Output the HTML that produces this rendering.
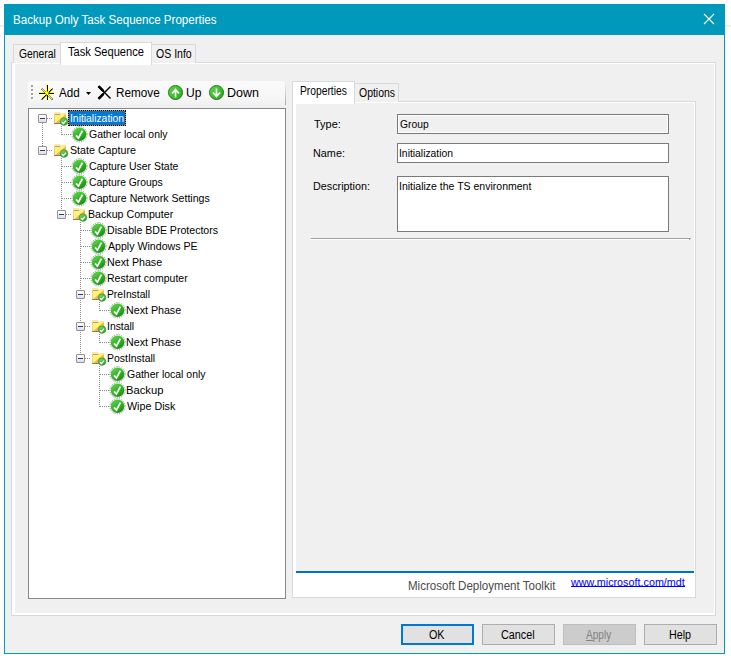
<!DOCTYPE html>
<html><head><meta charset="utf-8"><style>
html,body{margin:0;padding:0;background:#fff;width:731px;height:660px;overflow:hidden;position:relative}
.tx{position:absolute;white-space:nowrap;font-family:"Liberation Sans",sans-serif;transform-origin:0 0}
</style></head><body>
<div style="position:absolute;left:0px;top:25px;width:4px;height:2px;background:#efefef"></div><div style="position:absolute;left:725px;top:25px;width:6px;height:2px;background:#efefef"></div><div style="position:absolute;left:4px;top:4px;width:721px;height:650px;background:#0099bc"></div><div style="position:absolute;left:5px;top:35px;width:719px;height:618px;background:#f0f0f0"></div><svg style="position:absolute;left:703px;top:13px" width="12" height="12"><path d="M1 1L11 11M11 1L1 11" stroke="#fff" stroke-width="1.1"/></svg><div style="position:absolute;left:11px;top:62px;width:703px;height:552px;border:1px solid #d9d9d9;background:#fff"></div><div style="position:absolute;left:15px;top:64px;width:699px;height:549px;background:#f0f0f0"></div><div style="position:absolute;left:13px;top:44px;width:46px;height:18px;border:1px solid #d9d9d9;border-bottom:none;background:#f0f0f0"></div><div style="position:absolute;left:151px;top:44px;width:43px;height:18px;border:1px solid #d9d9d9;border-bottom:none;background:#f0f0f0"></div><div style="position:absolute;left:60px;top:42px;width:90px;height:22px;border:1px solid #d9d9d9;border-bottom:none;background:#fff"></div><div style="position:absolute;left:28px;top:81px;width:257px;height:24px;background:linear-gradient(#fbfbfb,#f6f6f6 70%,#f1f1f1);border-radius:3px 3px 0 0"></div><div style="position:absolute;left:285px;top:84px;width:1px;height:21px;background:linear-gradient(#ececec,#a8a8a8)"></div><div style="position:absolute;left:32px;top:86px;width:2px;height:2px;background:#fff"></div><div style="position:absolute;left:31px;top:85px;width:2px;height:2px;background:#a0a0a0"></div><div style="position:absolute;left:32px;top:90px;width:2px;height:2px;background:#fff"></div><div style="position:absolute;left:31px;top:89px;width:2px;height:2px;background:#a0a0a0"></div><div style="position:absolute;left:32px;top:94px;width:2px;height:2px;background:#fff"></div><div style="position:absolute;left:31px;top:93px;width:2px;height:2px;background:#a0a0a0"></div><div style="position:absolute;left:32px;top:98px;width:2px;height:2px;background:#fff"></div><div style="position:absolute;left:31px;top:97px;width:2px;height:2px;background:#a0a0a0"></div><svg style="position:absolute;left:38px;top:84px" width="18" height="18" viewBox="0 0 18 18">
<g stroke-width="1" shape-rendering="crispEdges">
<path d="M9.5 1V16M1 9.5H16" stroke="#000"/>
<path d="M8.5 1V16M1 8.5H16" stroke="#ff0"/>
</g>
<path d="M3.5 4.5L14.5 15.5M14.5 4.5L3.5 15.5" stroke="#000" stroke-width="1.3"/>
<path d="M3 4L14 15M14 4L3 15" stroke="#ff0" stroke-width="1"/>
<circle cx="9" cy="9" r="1.8" fill="#ff0"/>
</svg><svg style="position:absolute;left:86px;top:92px" width="5" height="3"><path d="M0 0H5L2.5 3Z" fill="#000"/></svg><svg style="position:absolute;left:97px;top:85px" width="15" height="15" viewBox="0 0 15 15">
<path d="M1.5 1.5L13.5 13.5" stroke="#000" stroke-width="1.4"/>
<path d="M1.5 1.2L6.5 6.2" stroke="#000" stroke-width="2.6"/>
<path d="M13.5 1.5L1.5 13.5" stroke="#000" stroke-width="1.4"/>
<path d="M1.5 13.8L6.5 8.8" stroke="#000" stroke-width="2.6"/>
</svg><svg style="position:absolute;left:168.0px;top:85px" width="15" height="15" viewBox="0 0 15 15">
<defs><linearGradient id="g175.5" x1="0" y1="0" x2="1" y2="1"><stop offset="0" stop-color="#5fd84f"/><stop offset="1" stop-color="#25a51a"/></linearGradient></defs>
<circle cx="7.5" cy="7.5" r="7" fill="url(#g175.5)" stroke="#15800e" stroke-width="1"/>
<path d="M4 8.5L7.5 4.5L11 8.5M7.5 5V12.5" stroke="#fff" stroke-width="1.7" fill="none"/>
</svg><svg style="position:absolute;left:209.0px;top:85px" width="15" height="15" viewBox="0 0 15 15">
<defs><linearGradient id="g216.5" x1="0" y1="0" x2="1" y2="1"><stop offset="0" stop-color="#5fd84f"/><stop offset="1" stop-color="#25a51a"/></linearGradient></defs>
<circle cx="7.5" cy="7.5" r="7" fill="url(#g216.5)" stroke="#15800e" stroke-width="1"/>
<path d="M4 7.5L7.5 11.5L11 7.5M7.5 11V3.5" stroke="#fff" stroke-width="1.7" fill="none"/>
</svg><div style="position:absolute;left:28px;top:108px;width:256px;height:489px;border:1px solid #828790;background:#fff"></div><svg style="position:absolute;left:0;top:0" width="731" height="660"><defs><linearGradient id="gc" x1="0.2" y1="0" x2="0.8" y2="1"><stop offset="0" stop-color="#5cd84a"/><stop offset="0.55" stop-color="#2fb022"/><stop offset="1" stop-color="#178a10"/></linearGradient><linearGradient id="gf" x1="0" y1="0" x2="1" y2="1"><stop offset="0" stop-color="#fbc45a"/><stop offset="1" stop-color="#f6a72e"/></linearGradient><linearGradient id="gb" x1="0" y1="0" x2="1" y2="1"><stop offset="0" stop-color="#7ee06a"/><stop offset="1" stop-color="#1f9a16"/></linearGradient></defs><path d="M47 118.5H53" stroke="#8c8c8c" stroke-dasharray="1 1"/><path d="M62 134.5H71" stroke="#8c8c8c" stroke-dasharray="1 1"/><path d="M47 150.5H53" stroke="#8c8c8c" stroke-dasharray="1 1"/><path d="M62 166.5H71" stroke="#8c8c8c" stroke-dasharray="1 1"/><path d="M62 182.5H71" stroke="#8c8c8c" stroke-dasharray="1 1"/><path d="M62 198.5H71" stroke="#8c8c8c" stroke-dasharray="1 1"/><path d="M66 214.5H72" stroke="#8c8c8c" stroke-dasharray="1 1"/><path d="M81 230.5H90" stroke="#8c8c8c" stroke-dasharray="1 1"/><path d="M81 246.5H90" stroke="#8c8c8c" stroke-dasharray="1 1"/><path d="M81 262.5H90" stroke="#8c8c8c" stroke-dasharray="1 1"/><path d="M81 278.5H90" stroke="#8c8c8c" stroke-dasharray="1 1"/><path d="M85 294.5H91" stroke="#8c8c8c" stroke-dasharray="1 1"/><path d="M100 310.5H109" stroke="#8c8c8c" stroke-dasharray="1 1"/><path d="M85 326.5H91" stroke="#8c8c8c" stroke-dasharray="1 1"/><path d="M100 342.5H109" stroke="#8c8c8c" stroke-dasharray="1 1"/><path d="M85 358.5H91" stroke="#8c8c8c" stroke-dasharray="1 1"/><path d="M100 374.5H109" stroke="#8c8c8c" stroke-dasharray="1 1"/><path d="M100 390.5H109" stroke="#8c8c8c" stroke-dasharray="1 1"/><path d="M100 406.5H109" stroke="#8c8c8c" stroke-dasharray="1 1"/><path d="M42.5 123V146" stroke="#8c8c8c" stroke-dasharray="1 1"/><path d="M61.5 126V135" stroke="#8c8c8c" stroke-dasharray="1 1"/><path d="M61.5 158V210" stroke="#8c8c8c" stroke-dasharray="1 1"/><path d="M80.5 222V354" stroke="#8c8c8c" stroke-dasharray="1 1"/><path d="M99.5 302V311" stroke="#8c8c8c" stroke-dasharray="1 1"/><path d="M99.5 334V343" stroke="#8c8c8c" stroke-dasharray="1 1"/><path d="M99.5 366V407" stroke="#8c8c8c" stroke-dasharray="1 1"/><g transform="translate(52,110)">
<rect x="2" y="3" width="12" height="11" fill="url(#gf)"/>
<path d="M2 3H14V4L3.5 13H2Z" fill="#fff27a"/>
<rect x="2" y="2" width="6" height="2" fill="#fbe9a0"/>
<rect x="8" y="3" width="6" height="1" fill="#fce9a8"/>
<rect x="2" y="4" width="6" height="1" fill="#a8a08a"/>
<rect x="2" y="4" width="1" height="9" fill="#f6cf70"/>
<rect x="2" y="13" width="8" height="1" fill="#7c7c7c"/>
<circle cx="12" cy="11.6" r="3.8" fill="url(#gb)" stroke="#2f8a26" stroke-width="0.6"/>
<path d="M10 12.2L11.5 13.5L14.1 10.6" stroke="#fff" stroke-width="1.3" fill="none"/>
</g><g transform="translate(71,126)">
<circle cx="8.5" cy="8.3" r="7.6" fill="none" stroke="#8a8a8a" stroke-width="1" stroke-dasharray="1.1 1.2"/>
<circle cx="8.5" cy="8.3" r="6.8" fill="url(#gc)"/>
<path d="M5 9.4L7.4 12.2L11.4 4.6" stroke="#fff" stroke-width="1.8" fill="none" stroke-linejoin="round"/>
</g><g transform="translate(52,142)">
<rect x="2" y="3" width="12" height="11" fill="url(#gf)"/>
<path d="M2 3H14V4L3.5 13H2Z" fill="#fff27a"/>
<rect x="2" y="2" width="6" height="2" fill="#fbe9a0"/>
<rect x="8" y="3" width="6" height="1" fill="#fce9a8"/>
<rect x="2" y="4" width="6" height="1" fill="#a8a08a"/>
<rect x="2" y="4" width="1" height="9" fill="#f6cf70"/>
<rect x="2" y="13" width="8" height="1" fill="#7c7c7c"/>
<circle cx="12" cy="11.6" r="3.8" fill="url(#gb)" stroke="#2f8a26" stroke-width="0.6"/>
<path d="M10 12.2L11.5 13.5L14.1 10.6" stroke="#fff" stroke-width="1.3" fill="none"/>
</g><g transform="translate(71,158)">
<circle cx="8.5" cy="8.3" r="7.6" fill="none" stroke="#8a8a8a" stroke-width="1" stroke-dasharray="1.1 1.2"/>
<circle cx="8.5" cy="8.3" r="6.8" fill="url(#gc)"/>
<path d="M5 9.4L7.4 12.2L11.4 4.6" stroke="#fff" stroke-width="1.8" fill="none" stroke-linejoin="round"/>
</g><g transform="translate(71,174)">
<circle cx="8.5" cy="8.3" r="7.6" fill="none" stroke="#8a8a8a" stroke-width="1" stroke-dasharray="1.1 1.2"/>
<circle cx="8.5" cy="8.3" r="6.8" fill="url(#gc)"/>
<path d="M5 9.4L7.4 12.2L11.4 4.6" stroke="#fff" stroke-width="1.8" fill="none" stroke-linejoin="round"/>
</g><g transform="translate(71,190)">
<circle cx="8.5" cy="8.3" r="7.6" fill="none" stroke="#8a8a8a" stroke-width="1" stroke-dasharray="1.1 1.2"/>
<circle cx="8.5" cy="8.3" r="6.8" fill="url(#gc)"/>
<path d="M5 9.4L7.4 12.2L11.4 4.6" stroke="#fff" stroke-width="1.8" fill="none" stroke-linejoin="round"/>
</g><g transform="translate(71,206)">
<rect x="2" y="3" width="12" height="11" fill="url(#gf)"/>
<path d="M2 3H14V4L3.5 13H2Z" fill="#fff27a"/>
<rect x="2" y="2" width="6" height="2" fill="#fbe9a0"/>
<rect x="8" y="3" width="6" height="1" fill="#fce9a8"/>
<rect x="2" y="4" width="6" height="1" fill="#a8a08a"/>
<rect x="2" y="4" width="1" height="9" fill="#f6cf70"/>
<rect x="2" y="13" width="8" height="1" fill="#7c7c7c"/>
<circle cx="12" cy="11.6" r="3.8" fill="url(#gb)" stroke="#2f8a26" stroke-width="0.6"/>
<path d="M10 12.2L11.5 13.5L14.1 10.6" stroke="#fff" stroke-width="1.3" fill="none"/>
</g><g transform="translate(90,222)">
<circle cx="8.5" cy="8.3" r="7.6" fill="none" stroke="#8a8a8a" stroke-width="1" stroke-dasharray="1.1 1.2"/>
<circle cx="8.5" cy="8.3" r="6.8" fill="url(#gc)"/>
<path d="M5 9.4L7.4 12.2L11.4 4.6" stroke="#fff" stroke-width="1.8" fill="none" stroke-linejoin="round"/>
</g><g transform="translate(90,238)">
<circle cx="8.5" cy="8.3" r="7.6" fill="none" stroke="#8a8a8a" stroke-width="1" stroke-dasharray="1.1 1.2"/>
<circle cx="8.5" cy="8.3" r="6.8" fill="url(#gc)"/>
<path d="M5 9.4L7.4 12.2L11.4 4.6" stroke="#fff" stroke-width="1.8" fill="none" stroke-linejoin="round"/>
</g><g transform="translate(90,254)">
<circle cx="8.5" cy="8.3" r="7.6" fill="none" stroke="#8a8a8a" stroke-width="1" stroke-dasharray="1.1 1.2"/>
<circle cx="8.5" cy="8.3" r="6.8" fill="url(#gc)"/>
<path d="M5 9.4L7.4 12.2L11.4 4.6" stroke="#fff" stroke-width="1.8" fill="none" stroke-linejoin="round"/>
</g><g transform="translate(90,270)">
<circle cx="8.5" cy="8.3" r="7.6" fill="none" stroke="#8a8a8a" stroke-width="1" stroke-dasharray="1.1 1.2"/>
<circle cx="8.5" cy="8.3" r="6.8" fill="url(#gc)"/>
<path d="M5 9.4L7.4 12.2L11.4 4.6" stroke="#fff" stroke-width="1.8" fill="none" stroke-linejoin="round"/>
</g><g transform="translate(90,286)">
<rect x="2" y="3" width="12" height="11" fill="url(#gf)"/>
<path d="M2 3H14V4L3.5 13H2Z" fill="#fff27a"/>
<rect x="2" y="2" width="6" height="2" fill="#fbe9a0"/>
<rect x="8" y="3" width="6" height="1" fill="#fce9a8"/>
<rect x="2" y="4" width="6" height="1" fill="#a8a08a"/>
<rect x="2" y="4" width="1" height="9" fill="#f6cf70"/>
<rect x="2" y="13" width="8" height="1" fill="#7c7c7c"/>
<circle cx="12" cy="11.6" r="3.8" fill="url(#gb)" stroke="#2f8a26" stroke-width="0.6"/>
<path d="M10 12.2L11.5 13.5L14.1 10.6" stroke="#fff" stroke-width="1.3" fill="none"/>
</g><g transform="translate(109,302)">
<circle cx="8.5" cy="8.3" r="7.6" fill="none" stroke="#8a8a8a" stroke-width="1" stroke-dasharray="1.1 1.2"/>
<circle cx="8.5" cy="8.3" r="6.8" fill="url(#gc)"/>
<path d="M5 9.4L7.4 12.2L11.4 4.6" stroke="#fff" stroke-width="1.8" fill="none" stroke-linejoin="round"/>
</g><g transform="translate(90,318)">
<rect x="2" y="3" width="12" height="11" fill="url(#gf)"/>
<path d="M2 3H14V4L3.5 13H2Z" fill="#fff27a"/>
<rect x="2" y="2" width="6" height="2" fill="#fbe9a0"/>
<rect x="8" y="3" width="6" height="1" fill="#fce9a8"/>
<rect x="2" y="4" width="6" height="1" fill="#a8a08a"/>
<rect x="2" y="4" width="1" height="9" fill="#f6cf70"/>
<rect x="2" y="13" width="8" height="1" fill="#7c7c7c"/>
<circle cx="12" cy="11.6" r="3.8" fill="url(#gb)" stroke="#2f8a26" stroke-width="0.6"/>
<path d="M10 12.2L11.5 13.5L14.1 10.6" stroke="#fff" stroke-width="1.3" fill="none"/>
</g><g transform="translate(109,334)">
<circle cx="8.5" cy="8.3" r="7.6" fill="none" stroke="#8a8a8a" stroke-width="1" stroke-dasharray="1.1 1.2"/>
<circle cx="8.5" cy="8.3" r="6.8" fill="url(#gc)"/>
<path d="M5 9.4L7.4 12.2L11.4 4.6" stroke="#fff" stroke-width="1.8" fill="none" stroke-linejoin="round"/>
</g><g transform="translate(90,350)">
<rect x="2" y="3" width="12" height="11" fill="url(#gf)"/>
<path d="M2 3H14V4L3.5 13H2Z" fill="#fff27a"/>
<rect x="2" y="2" width="6" height="2" fill="#fbe9a0"/>
<rect x="8" y="3" width="6" height="1" fill="#fce9a8"/>
<rect x="2" y="4" width="6" height="1" fill="#a8a08a"/>
<rect x="2" y="4" width="1" height="9" fill="#f6cf70"/>
<rect x="2" y="13" width="8" height="1" fill="#7c7c7c"/>
<circle cx="12" cy="11.6" r="3.8" fill="url(#gb)" stroke="#2f8a26" stroke-width="0.6"/>
<path d="M10 12.2L11.5 13.5L14.1 10.6" stroke="#fff" stroke-width="1.3" fill="none"/>
</g><g transform="translate(109,366)">
<circle cx="8.5" cy="8.3" r="7.6" fill="none" stroke="#8a8a8a" stroke-width="1" stroke-dasharray="1.1 1.2"/>
<circle cx="8.5" cy="8.3" r="6.8" fill="url(#gc)"/>
<path d="M5 9.4L7.4 12.2L11.4 4.6" stroke="#fff" stroke-width="1.8" fill="none" stroke-linejoin="round"/>
</g><g transform="translate(109,382)">
<circle cx="8.5" cy="8.3" r="7.6" fill="none" stroke="#8a8a8a" stroke-width="1" stroke-dasharray="1.1 1.2"/>
<circle cx="8.5" cy="8.3" r="6.8" fill="url(#gc)"/>
<path d="M5 9.4L7.4 12.2L11.4 4.6" stroke="#fff" stroke-width="1.8" fill="none" stroke-linejoin="round"/>
</g><g transform="translate(109,398)">
<circle cx="8.5" cy="8.3" r="7.6" fill="none" stroke="#8a8a8a" stroke-width="1" stroke-dasharray="1.1 1.2"/>
<circle cx="8.5" cy="8.3" r="6.8" fill="url(#gc)"/>
<path d="M5 9.4L7.4 12.2L11.4 4.6" stroke="#fff" stroke-width="1.8" fill="none" stroke-linejoin="round"/>
</g></svg><div style="position:absolute;left:38px;top:114px;width:7px;height:7px;border:1px solid #919191;border-radius:1px;background:linear-gradient(#fff,#e0e0e0)"></div><div style="position:absolute;left:40px;top:118px;width:5px;height:1px;background:#1e3a8a"></div><div style="position:absolute;left:38px;top:146px;width:7px;height:7px;border:1px solid #919191;border-radius:1px;background:linear-gradient(#fff,#e0e0e0)"></div><div style="position:absolute;left:40px;top:150px;width:5px;height:1px;background:#1e3a8a"></div><div style="position:absolute;left:57px;top:210px;width:7px;height:7px;border:1px solid #919191;border-radius:1px;background:linear-gradient(#fff,#e0e0e0)"></div><div style="position:absolute;left:59px;top:214px;width:5px;height:1px;background:#1e3a8a"></div><div style="position:absolute;left:76px;top:290px;width:7px;height:7px;border:1px solid #919191;border-radius:1px;background:linear-gradient(#fff,#e0e0e0)"></div><div style="position:absolute;left:78px;top:294px;width:5px;height:1px;background:#1e3a8a"></div><div style="position:absolute;left:76px;top:322px;width:7px;height:7px;border:1px solid #919191;border-radius:1px;background:linear-gradient(#fff,#e0e0e0)"></div><div style="position:absolute;left:78px;top:326px;width:5px;height:1px;background:#1e3a8a"></div><div style="position:absolute;left:76px;top:354px;width:7px;height:7px;border:1px solid #919191;border-radius:1px;background:linear-gradient(#fff,#e0e0e0)"></div><div style="position:absolute;left:78px;top:358px;width:5px;height:1px;background:#1e3a8a"></div><div style="position:absolute;left:68px;top:110px;width:58px;height:16px;background:#0078d7"></div><div style="position:absolute;left:68px;top:110px;width:58px;height:16px;box-sizing:border-box;border:1px solid #ff8c1a"></div><div style="position:absolute;left:68px;top:110px;width:58px;height:16px;box-sizing:border-box;border:1px dotted #000"></div><div style="position:absolute;left:292px;top:101px;width:402px;height:495px;border:1px solid #d9d9d9;background:#fff"></div><div style="position:absolute;left:296px;top:103px;width:398px;height:468px;background:#f0f0f0"></div><div style="position:absolute;left:296px;top:571px;width:398px;height:2px;background:#0070c8"></div><div style="position:absolute;left:354px;top:83px;width:43px;height:18px;border:1px solid #d9d9d9;border-bottom:none;background:#f0f0f0"></div><div style="position:absolute;left:292px;top:81px;width:61px;height:22px;border:1px solid #d9d9d9;border-bottom:none;background:#fff"></div><div style="position:absolute;left:397px;top:114px;width:270px;height:18px;border:1px solid #7a7a7a;background:#f0f0f0"></div><div style="position:absolute;left:398px;top:115px;width:268px;height:16px;border:1px solid #fff;background:#f0f0f0"></div><div style="position:absolute;left:397px;top:143px;width:270px;height:18px;border:1px solid #7a7a7a;background:#fff"></div><div style="position:absolute;left:397px;top:176px;width:270px;height:54px;border:1px solid #7a7a7a;background:#fff"></div><div style="position:absolute;left:311px;top:238px;width:380px;height:1px;background:#a0a0a0"></div><div style="position:absolute;left:311px;top:239px;width:378px;height:1px;background:#fff"></div><div style="position:absolute;left:689px;top:239px;width:1px;height:1px;background:#a0a0a0"></div><div style="position:absolute;left:571px;top:586px;width:114px;height:1px;background:#0000ff"></div><div style="position:absolute;left:401px;top:624px;width:69px;height:17px;border:2px solid #0078d7;background:#e1e1e1"></div><div style="position:absolute;left:482px;top:624px;width:71px;height:19px;border:1px solid #adadad;background:#e1e1e1"></div><div style="position:absolute;left:563px;top:624px;width:71px;height:19px;border:1px solid #bfbfbf;background:#cccccc"></div><div style="position:absolute;left:644px;top:624px;width:71px;height:19px;border:1px solid #adadad;background:#e1e1e1"></div><div style="position:absolute;left:586px;top:640px;width:7px;height:1px;background:#838383"></div>
<div class="tx" style="left:12.75px;top:13.84px;font-size:12px;line-height:12px;color:#fff;transform:scaleX(0.9637);">Backup Only Task Sequence Properties</div><div class="tx" style="left:18.75px;top:47.84px;font-size:12px;line-height:12px;color:#000;transform:scaleX(0.8627);">General</div><div class="tx" style="left:68.00px;top:45.84px;font-size:12px;line-height:12px;color:#000;transform:scaleX(0.9257);">Task Sequence</div><div class="tx" style="left:155.75px;top:47.84px;font-size:12px;line-height:12px;color:#000;transform:scaleX(0.8780);">OS Info</div><div class="tx" style="left:58.50px;top:86.84px;font-size:12px;line-height:12px;color:#000;transform:scaleX(0.9677);">Add</div><div class="tx" style="left:115.50px;top:86.84px;font-size:12px;line-height:12px;color:#000;transform:scaleX(0.9788);">Remove</div><div class="tx" style="left:185.50px;top:86.84px;font-size:12px;line-height:12px;color:#000;transform:scaleX(1.0058);">Up</div><div class="tx" style="left:227.25px;top:86.84px;font-size:12px;line-height:12px;color:#000;transform:scaleX(1.0429);">Down</div><div class="tx" style="left:69.57px;top:112.69px;font-size:11px;line-height:11px;color:#fff;transform:scaleX(0.9405);">Initialization</div><div class="tx" style="left:88.50px;top:128.69px;font-size:11px;line-height:11px;color:#000;transform:scaleX(0.9514);">Gather local only</div><div class="tx" style="left:69.50px;top:144.69px;font-size:11px;line-height:11px;color:#000;transform:scaleX(0.9708);">State Capture</div><div class="tx" style="left:88.50px;top:160.69px;font-size:11px;line-height:11px;color:#000;transform:scaleX(0.9491);">Capture User State</div><div class="tx" style="left:88.50px;top:176.69px;font-size:11px;line-height:11px;color:#000;transform:scaleX(0.9428);">Capture Groups</div><div class="tx" style="left:88.50px;top:192.69px;font-size:11px;line-height:11px;color:#000;transform:scaleX(0.9636);">Capture Network Settings</div><div class="tx" style="left:87.50px;top:208.69px;font-size:11px;line-height:11px;color:#000;transform:scaleX(0.9676);">Backup Computer</div><div class="tx" style="left:107.25px;top:224.69px;font-size:11px;line-height:11px;color:#000;transform:scaleX(0.9611);">Disable BDE Protectors</div><div class="tx" style="left:108.25px;top:240.69px;font-size:11px;line-height:11px;color:#000;transform:scaleX(0.9640);">Apply Windows PE</div><div class="tx" style="left:107.25px;top:256.69px;font-size:11px;line-height:11px;color:#000;transform:scaleX(0.9696);">Next Phase</div><div class="tx" style="left:107.25px;top:272.69px;font-size:11px;line-height:11px;color:#000;transform:scaleX(0.9565);">Restart computer</div><div class="tx" style="left:107.25px;top:288.69px;font-size:11px;line-height:11px;color:#000;transform:scaleX(0.9363);">PreInstall</div><div class="tx" style="left:126.25px;top:304.69px;font-size:11px;line-height:11px;color:#000;transform:scaleX(0.9696);">Next Phase</div><div class="tx" style="left:107.32px;top:320.69px;font-size:11px;line-height:11px;color:#000;transform:scaleX(0.9438);">Install</div><div class="tx" style="left:126.25px;top:336.69px;font-size:11px;line-height:11px;color:#000;transform:scaleX(0.9696);">Next Phase</div><div class="tx" style="left:107.25px;top:352.69px;font-size:11px;line-height:11px;color:#000;transform:scaleX(0.9496);">PostInstall</div><div class="tx" style="left:127.25px;top:368.69px;font-size:11px;line-height:11px;color:#000;transform:scaleX(0.9514);">Gather local only</div><div class="tx" style="left:126.25px;top:384.69px;font-size:11px;line-height:11px;color:#000;transform:scaleX(1.0207);">Backup</div><div class="tx" style="left:127.25px;top:400.69px;font-size:11px;line-height:11px;color:#000;transform:scaleX(0.9752);">Wipe Disk</div><div class="tx" style="left:299.50px;top:84.84px;font-size:12px;line-height:12px;color:#000;transform:scaleX(0.8552);">Properties</div><div class="tx" style="left:358.50px;top:87.14px;font-size:12px;line-height:12px;color:#000;transform:scaleX(0.8707);">Options</div><div class="tx" style="left:313.50px;top:118.69px;font-size:11px;line-height:11px;color:#000;transform:scaleX(0.9975);">Type:</div><div class="tx" style="left:312.50px;top:147.69px;font-size:11px;line-height:11px;color:#000;transform:scaleX(0.9858);">Name:</div><div class="tx" style="left:312.50px;top:180.69px;font-size:11px;line-height:11px;color:#000;transform:scaleX(0.9792);">Description:</div><div class="tx" style="left:399.50px;top:118.69px;font-size:11px;line-height:11px;color:#000;transform:scaleX(0.9360);">Group</div><div class="tx" style="left:399.31px;top:147.69px;font-size:11px;line-height:11px;color:#000;transform:scaleX(0.9404);">Initialization</div><div class="tx" style="left:399.30px;top:180.69px;font-size:11px;line-height:11px;color:#000;transform:scaleX(0.9548);">Initialize the TS environment</div><div class="tx" style="left:407.50px;top:579.84px;font-size:12px;line-height:12px;color:#4a4a4a;transform:scaleX(0.9625);">Microsoft Deployment Toolkit</div><div class="tx" style="left:570.72px;top:576.69px;font-size:11px;line-height:11px;color:#0000ff;transform:scaleX(0.9802);">www.microsoft.com/mdt</div><div class="tx" style="left:429.25px;top:628.84px;font-size:12px;line-height:12px;color:#000;transform:scaleX(0.8949);">OK</div><div class="tx" style="left:501.25px;top:628.84px;font-size:12px;line-height:12px;color:#000;transform:scaleX(0.8995);">Cancel</div><div class="tx" style="left:586.25px;top:628.84px;font-size:12px;line-height:12px;color:#838383;transform:scaleX(0.8414);">Apply</div><div class="tx" style="left:668.50px;top:628.84px;font-size:12px;line-height:12px;color:#000;transform:scaleX(0.8954);">Help</div>
</body></html>
